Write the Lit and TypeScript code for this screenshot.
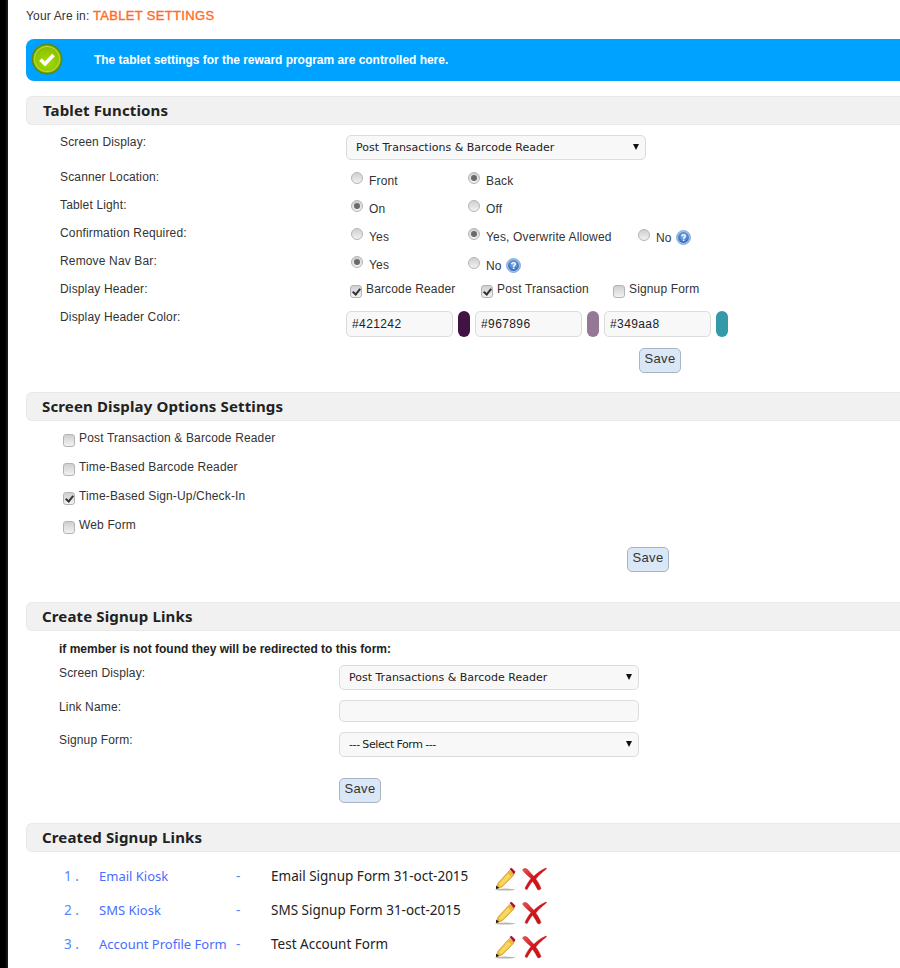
import { LitElement, html, css, svg } from "lit";
import { customElement } from "lit/decorators.js";

const help = html`<svg class="help" viewBox="0 0 16 16" width="15" height="15" aria-hidden="true">
  <defs><radialGradient id="hb" cx="50%" cy="40%" r="60%"><stop offset="0" stop-color="#8fb8ea"/><stop offset="1" stop-color="#2a66b8"/></radialGradient></defs>
  <circle cx="8" cy="8" r="7.400" fill="#a9c6ea" stroke="#6f9ad4" stroke-width=".9"/>
  <circle cx="8" cy="8" r="5.800" fill="url(#hb)"/>
  <path d="M6 6.500c.2-1.100 1-1.600 2-1.600 1.100 0 2 .6 2 1.600 0 1.400-1.900 1.400-1.900 2.800" fill="none" stroke="#fff" stroke-width="1.500"/>
  <rect x="7.300" y="10.200" width="1.600" height="1.500" fill="#fff"/>
</svg>`;

const pencil = svg`<svg class="ico" viewBox="0 0 22 24" width="22" height="24" aria-hidden="true">
  <ellipse cx="10" cy="22.600" rx="10" ry="1" fill="#b5b5b5"/>
  <path d="M14.500 3.500 19 8 7 20 1.600 21.600 3 16Z" fill="#efbb35" stroke="#c8902a" stroke-width=".6"/>
  <path d="M13 6.500 16 9.500 6 19.500 4 17Z" fill="#f8d860"/>
  <path d="M14.500 2 16.500.8 20.500 4.800 19 7.600Z" fill="#b5141c"/>
  <path d="M1.200 18.500 4.200 21 1 22Z" fill="#111"/>
</svg>`;

const cross = svg`<svg class="ico" viewBox="0 0 26 24" width="26" height="24" aria-hidden="true">
  <defs><linearGradient id="xr" x1="0" y1="0" x2="1" y2="1"><stop offset="0" stop-color="#e8595c"/><stop offset=".45" stop-color="#d3151a"/><stop offset="1" stop-color="#c2141a"/></linearGradient></defs>
  <path d="M1.500 3C3 .8 5.500 1.200 7 3c2 2.400 3.800 4.300 5.800 6.300C16 6 20 3 25 1l.6.800c-4.200 3-8 6.800-10.800 10.200 2.200 2.800 4 6 5.200 9.500-.8 1.400-2.300 1.900-3.400 1-1.400-3-3.200-5.800-5-8.200-2.300 2.700-4.200 5.600-5.400 8.200-1 .2-1.900-.4-2.200-1.300 1.400-3.300 3.700-6.900 6-9.800C6.300 8.500 3.800 6 1.500 3Z" fill="url(#xr)" stroke="#b01015" stroke-width=".4"/>
</svg>`;

const tick = html`<svg class="tick" viewBox="0 0 32 32" width="32" height="32" aria-hidden="true">
  <defs><radialGradient id="gb" cx="50%" cy="60%" r="60%"><stop offset="0" stop-color="#a5dc00"/><stop offset="1" stop-color="#86b800"/></radialGradient></defs>
  <circle cx="16" cy="16" r="14.600" fill="url(#gb)" stroke="#5f8a10" stroke-width="1.600"/>
  <circle cx="16" cy="16" r="12.600" fill="none" stroke="#c3e25a" stroke-width=".8"/>
  <path d="M9.500 16.500l4.500 4.500 8.500-9" fill="none" stroke="#fff" stroke-width="3.600"/>
</svg>`;

@customElement("app-root")
export class AppRoot extends LitElement {
  static styles = css`
    :host { display: flex; width: 900px; height: 968px; overflow: hidden; background: #fff;
      font-family: "Liberation Sans", Arial, sans-serif; font-size: 12px; letter-spacing: .15px; color: #333; }
    .rail { width: 8px; flex: none; background: linear-gradient(90deg, #000 0, #000 5px, #222 8px); }
    main { flex: 1; min-width: 0; padding-left: 18px; }
    .crumb { height: 39px; box-sizing: border-box; padding-top: 9px; line-height: 14px; }
    .crumb b { font-weight: 400; font-size: 13px; letter-spacing: .33px; -webkit-text-stroke: .35px #ff6a26; color: #ff6a26; }
    .alert { height: 42px; background: #00a2ff; border-radius: 8px 0 0 8px; display: flex; align-items: center;
      color: #fff; font-weight: 700; letter-spacing: -.03px; padding-left: 5px; }
    .alert span { margin-left: 31px; margin-top: -1px; }
    .alert .tick { margin-top: -2px; }
    .head { height: 29px; box-sizing: border-box; background: #f1f1f1; border: 1px solid #e9e9e9; border-right: 0;
      border-radius: 6px 0 0 6px; padding: 0 0 2px 16px; display: flex; align-items: center;
      font: 700 15px "Noto Sans", Tahoma, sans-serif; letter-spacing: .14px; color: #222; }
    .h2 { padding-left: 15px; }
    .row { display: flex; height: 28px; }
    .lab { width: 320px; flex: none; padding-left: 34px; box-sizing: border-box; line-height: 14px; }
    .lab.c { width: 313px; padding-left: 33px; }
    .lab.p { padding-top: 1px; }
    .opt { display: inline-flex; align-items: center; gap: 6px; line-height: 14px; }
    .radios { display: flex; position: relative; top: 4px; align-items: flex-start; height: 18px; }
    .radios .opt { width: 117px; }
    .radios .opt.wide { width: 170px; }
    .radios .opt.auto { width: auto; }
    input[type="radio"], input[type="checkbox"] { appearance: none; margin: 0; flex: none; background: linear-gradient(#cfcfcf, #f2f2f2);
      border: 1px solid #b4b4b4; box-sizing: border-box; position: relative; }
    input[type="radio"] { width: 12px; height: 12px; border-radius: 50%; top: -3px; margin-left: 5px; }
    input[type="radio"]:checked::after { content: ""; position: absolute; inset: 2px; border-radius: 50%; background: #6a6a6a; }
    input[type="checkbox"] { width: 12px; height: 13px; border-radius: 3px; }
    input[type="checkbox"]:checked::after { content: ""; position: absolute; left: 3px; top: 1px; width: 3px; height: 6px; border: solid #333; border-width: 0 2px 2px 0; transform: rotate(40deg); }
    .sel { position: relative; display: block; }
    .sel::after { content: ""; position: absolute; right: 7px; top: 9px; border: 3.500px solid transparent; border-top: 6px solid #111; border-bottom: 0; }
    select, .txt { display: block; width: 300px; box-sizing: border-box; border: 1px solid #dcdcdc; border-radius: 5px; background: #f8f8f8;
      font: 11px "DejaVu Sans", Verdana, sans-serif; letter-spacing: 0; color: #222; padding: 0 0 0 9px; outline: 0; }
    select { appearance: none; height: 25px; }
    select.tight { letter-spacing: -.4px; word-spacing: -.5px; }
    .txt { height: 22px; }
    .checks { display: flex; height: 18px; padding-left: 4px; }
    .checks .opt { gap: 4px; align-items: flex-start; }
    .checks input { margin-top: 3px; }
    .colors { display: flex; align-items: center; height: 26px; margin-top: 1px; }
    .colors input { width: 107px; height: 26px; box-sizing: border-box; border: 1px solid #dcdcdc; border-radius: 5px; background: #f8f8f8;
      font: 12px "Liberation Sans", Arial, sans-serif; letter-spacing: .4px; color: #222; padding: 0 0 0 5px; }
    .sw { width: 12px; height: 26px; border-radius: 6px; margin: 0 5px; flex: none; }
    button { height: 25px; width: 42px; padding: 0 0 5px; box-sizing: border-box; background: #dae7f6; border: 1px solid #a9b4c2; border-radius: 5px;
      font: 13px "Liberation Sans", Arial, sans-serif; letter-spacing: .3px; color: #333; }
    .chk { display: flex; gap: 4px; height: 29px; padding-left: 37px; align-items: flex-start; }
    .chk input { margin-top: 3px; }
    .links { display: grid; grid-template-columns: 35px 137px 35px 224px 26px 26px; padding-left: 38px; margin-top: 11px; grid-auto-rows: 34px;
      font: 13.500px "Noto Sans", Tahoma, sans-serif; letter-spacing: 0; color: #222; align-items: start; }
    .links a { color: #4a6cff; text-decoration: none; font-size: 13px; }
    .links > span, .links > a { line-height: 26px; }
    .blue { color: #4a8cff; }
    .help { margin-left: -2px; }
    .ico { display: block; margin-top: 4px; }
    .tick { display: block; }
    .s1 { margin-top: 15px; }
    .s2 { margin-top: 19px; }
    .s3 { margin-top: 30px; }
    .s4 { margin-top: 20px; }
    .pt10 { padding-top: 10px; }
    .note { padding: 10px 0 0 33px; font-weight: 700; letter-spacing: 0; color: #222; line-height: 16px; }
    .pt8 { padding-top: 8px; }
    .r35 { height: 35px; }
    .r32 { height: 32px; }
    .r46 { height: 46px; }
    .r38 { height: 38px; }
    .w131 { width: 131px; }
    .w132 { width: 132px; }
    .save1 { padding-left: 613px; }
    .save2 { padding-left: 601px; }
    .save3 { padding-left: 313px; }
    .w2 { background: #421242; }
    .w3 { background: #967896; }
    .w4 { background: #349aa8; }
  `;

  private radio(label: string, on = false, cls = "", extra: unknown = null) {
    return html`<label class="opt ${cls}"><input type="radio" .checked=${on} />${label}${extra}</label>`;
  }

  private select(text: string, cls = "") {
    return html`<span class="sel"><select class=${cls}><option>${text}</option></select></span>`;
  }

  render() {
    const links = [
      ["1 .", "Email Kiosk", "Email Signup Form 31-oct-2015"],
      ["2 .", "SMS Kiosk", "SMS Signup Form 31-oct-2015"],
      ["3 .", "Account Profile Form", "Test Account Form"],
    ];
    return html`
      <div class="rail"></div>
      <main>
        <div class="crumb">Your Are in: <b>TABLET SETTINGS</b></div>
        <div class="alert">${tick}<span>The tablet settings for the reward program are controlled here.</span></div>

        <section class="s1">
          <div class="head">Tablet Functions</div>
          <div class="pt10">
            <div class="row r35"><div class="lab">Screen Display:</div>${this.select("Post Transactions & Barcode Reader")}</div>
            <div class="row"><div class="lab">Scanner Location:</div><div class="radios">${this.radio("Front")}${this.radio("Back", true)}</div></div>
            <div class="row"><div class="lab">Tablet Light:</div><div class="radios">${this.radio("On", true)}${this.radio("Off")}</div></div>
            <div class="row"><div class="lab">Confirmation Required:</div><div class="radios">${this.radio("Yes")}${this.radio("Yes, Overwrite Allowed", true, "wide")}${this.radio("No", false, "auto", help)}</div></div>
            <div class="row"><div class="lab">Remove Nav Bar:</div><div class="radios">${this.radio("Yes", true)}${this.radio("No", false, "auto", help)}</div></div>
            <div class="row"><div class="lab">Display Header:</div>
              <div class="checks">
                <label class="opt w131"><input type="checkbox" checked />Barcode Reader</label>
                <label class="opt w132"><input type="checkbox" checked />Post Transaction</label>
                <label class="opt"><input type="checkbox" />Signup Form</label>
              </div>
            </div>
            <div class="row r38"><div class="lab">Display Header Color:</div>
              <div class="colors">
                <input value="#421242" /><span class="sw w2"></span>
                <input value="#967896" /><span class="sw w3"></span>
                <input value="#349aa8" /><span class="sw w4"></span>
              </div>
            </div>
            <div class="save1"><button>Save</button></div>
          </div>
        </section>

        <section class="s2">
          <div class="head h2">Screen Display Options Settings</div>
          <div class="pt10">
            <label class="chk"><input type="checkbox" />Post Transaction &amp; Barcode Reader</label>
            <label class="chk"><input type="checkbox" />Time-Based Barcode Reader</label>
            <label class="chk"><input type="checkbox" checked />Time-Based Sign-Up/Check-In</label>
            <label class="chk"><input type="checkbox" />Web Form</label>
            <div class="save2"><button>Save</button></div>
          </div>
        </section>

        <section class="s3">
          <div class="head h2">Create Signup Links</div>
          <div class="note">if member is not found they will be redirected to this form:</div>
          <div class="pt8">
            <div class="row r35"><div class="lab c p">Screen Display:</div>${this.select("Post Transactions & Barcode Reader")}</div>
            <div class="row r32"><div class="lab c">Link Name:</div><input class="txt" /></div>
            <div class="row r46"><div class="lab c p">Signup Form:</div>${this.select("--- Select Form ---", "tight")}</div>
            <div class="save3"><button>Save</button></div>
          </div>
        </section>

        <section class="s4">
          <div class="head h2">Created Signup Links</div>
          <div class="links">
            ${links.map(([n, a, f]) => html`
              <span class="blue">${n}</span><a href="#">${a}</a><span class="blue">-</span><span>${f}</span>
              <span>${pencil}</span><span>${cross}</span>`)}
          </div>
        </section>
      </main>
    `;
  }
}
